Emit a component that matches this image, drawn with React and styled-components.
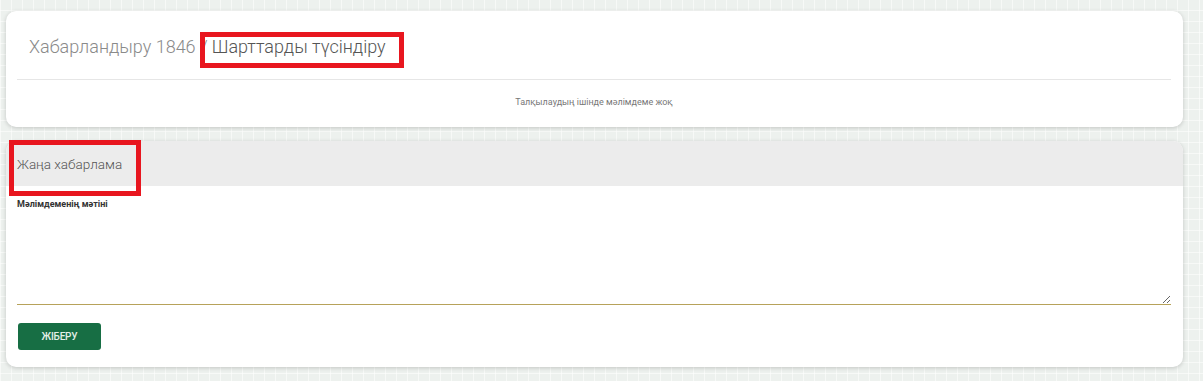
import React from "react";
import styled, { createGlobalStyle } from "styled-components";

const GlobalStyle = createGlobalStyle`
  html, body {
    margin: 0;
    padding: 0;
  }
  body {
    font-family: Roboto, "Noto Sans", sans-serif;
    background-color: #edf1ee;
    background-image:
      linear-gradient(90deg, rgba(255,255,255,0.55) 1px, transparent 1px),
      linear-gradient(0deg, rgba(255,255,255,0.55) 1px, transparent 1px);
    background-size: 11px 11px;
  }
`;

const Page = styled.div`
  width: 1177px;
  padding: 11px 0 14px 6px;
  display: flex;
  flex-direction: column;
  gap: 14px;
`;

const Card = styled.div`
  background: #fff;
  border-radius: 10px;
  box-shadow: 0 1px 4px rgba(0, 0, 0, 0.18);
`;

const TopCard = styled(Card)`
  height: 116px;
  padding: 0 12px 0 11px;
  box-sizing: border-box;
`;

const Title = styled.h1`
  margin: 0;
  padding: 24px 0 0 12px;
  height: 44px;
  font-size: 18px;
  font-weight: 300;
  line-height: 24px;
  color: #8a8a8a;
  border-bottom: 1px solid #e6e6e6;
  white-space: nowrap;
`;

const Sep = styled.span`
  margin: 0 4px 0 5px;
`;

const Marked = styled.span`
  display: inline-block;
  position: relative;
  color: #555;
  line-height: 24px;
  &::after {
    content: "";
    position: absolute;
    left: -12px;
    right: -18px;
    top: -3px;
    bottom: -9px;
    border: 5px solid #e8161f;
  }
`;

const Empty = styled.p`
  margin: 0;
  padding-top: 17px;
  text-align: center;
  font-size: 9px;
  color: #777;
`;

const FormCard = styled(Card)`
  height: 226px;
`;

const FormHeader = styled.div`
  height: 45px;
  background: #ececec;
  border-radius: 10px 10px 0 0;
  display: flex;
  align-items: center;
  padding-left: 11px;
  padding-top: 1px;
  box-sizing: border-box;
  position: relative;
  &::after {
    content: "";
    position: absolute;
    left: 3px;
    top: -1px;
    width: 122px;
    height: 46px;
    border: 5px solid #e8161f;
  }
`;

const HeaderText = styled.span`
  font-size: 13.5px;
  font-weight: 300;
  color: #555;
`;

const FormBody = styled.div`
  padding: 13px 12px 0 11px;
  display: flex;
  flex-direction: column;
`;

const Label = styled.label`
  font-size: 9px;
  font-weight: 700;
  color: #333;
  line-height: 11px;
`;

const TextArea = styled.textarea`
  height: 95px;
  width: 100%;
  box-sizing: border-box;
  border: none;
  border-bottom: 1px solid #b7a25a;
  outline: none;
  resize: vertical;
  background: transparent;
  font-family: inherit;
`;

const SendButton = styled.button`
  margin-top: 18px;
  margin-left: 1px;
  width: 83px;
  height: 27px;
  background: #176e44;
  color: #e3efe7;
  border: none;
  border-radius: 3px;
  font-family: Roboto, sans-serif;
  font-size: 10px;
  font-weight: 500;
  letter-spacing: -0.2px;
  cursor: pointer;
`;

export default function App() {
  return (
    <>
      <GlobalStyle />
      <Page>
        <TopCard>
          <Title>
            Хабарландыру 1846<Sep>/</Sep>
            <Marked>Шарттарды түсіндіру</Marked>
          </Title>
          <Empty>Талқылаудың ішінде мәлімдеме жоқ</Empty>
        </TopCard>
        <FormCard>
          <FormHeader>
            <HeaderText>Жаңа хабарлама</HeaderText>
          </FormHeader>
          <FormBody>
            <Label>Мәлімдеменің мәтіні</Label>
            <TextArea />
            <div>
              <SendButton>ЖІБЕРУ</SendButton>
            </div>
          </FormBody>
        </FormCard>
      </Page>
    </>
  );
}
